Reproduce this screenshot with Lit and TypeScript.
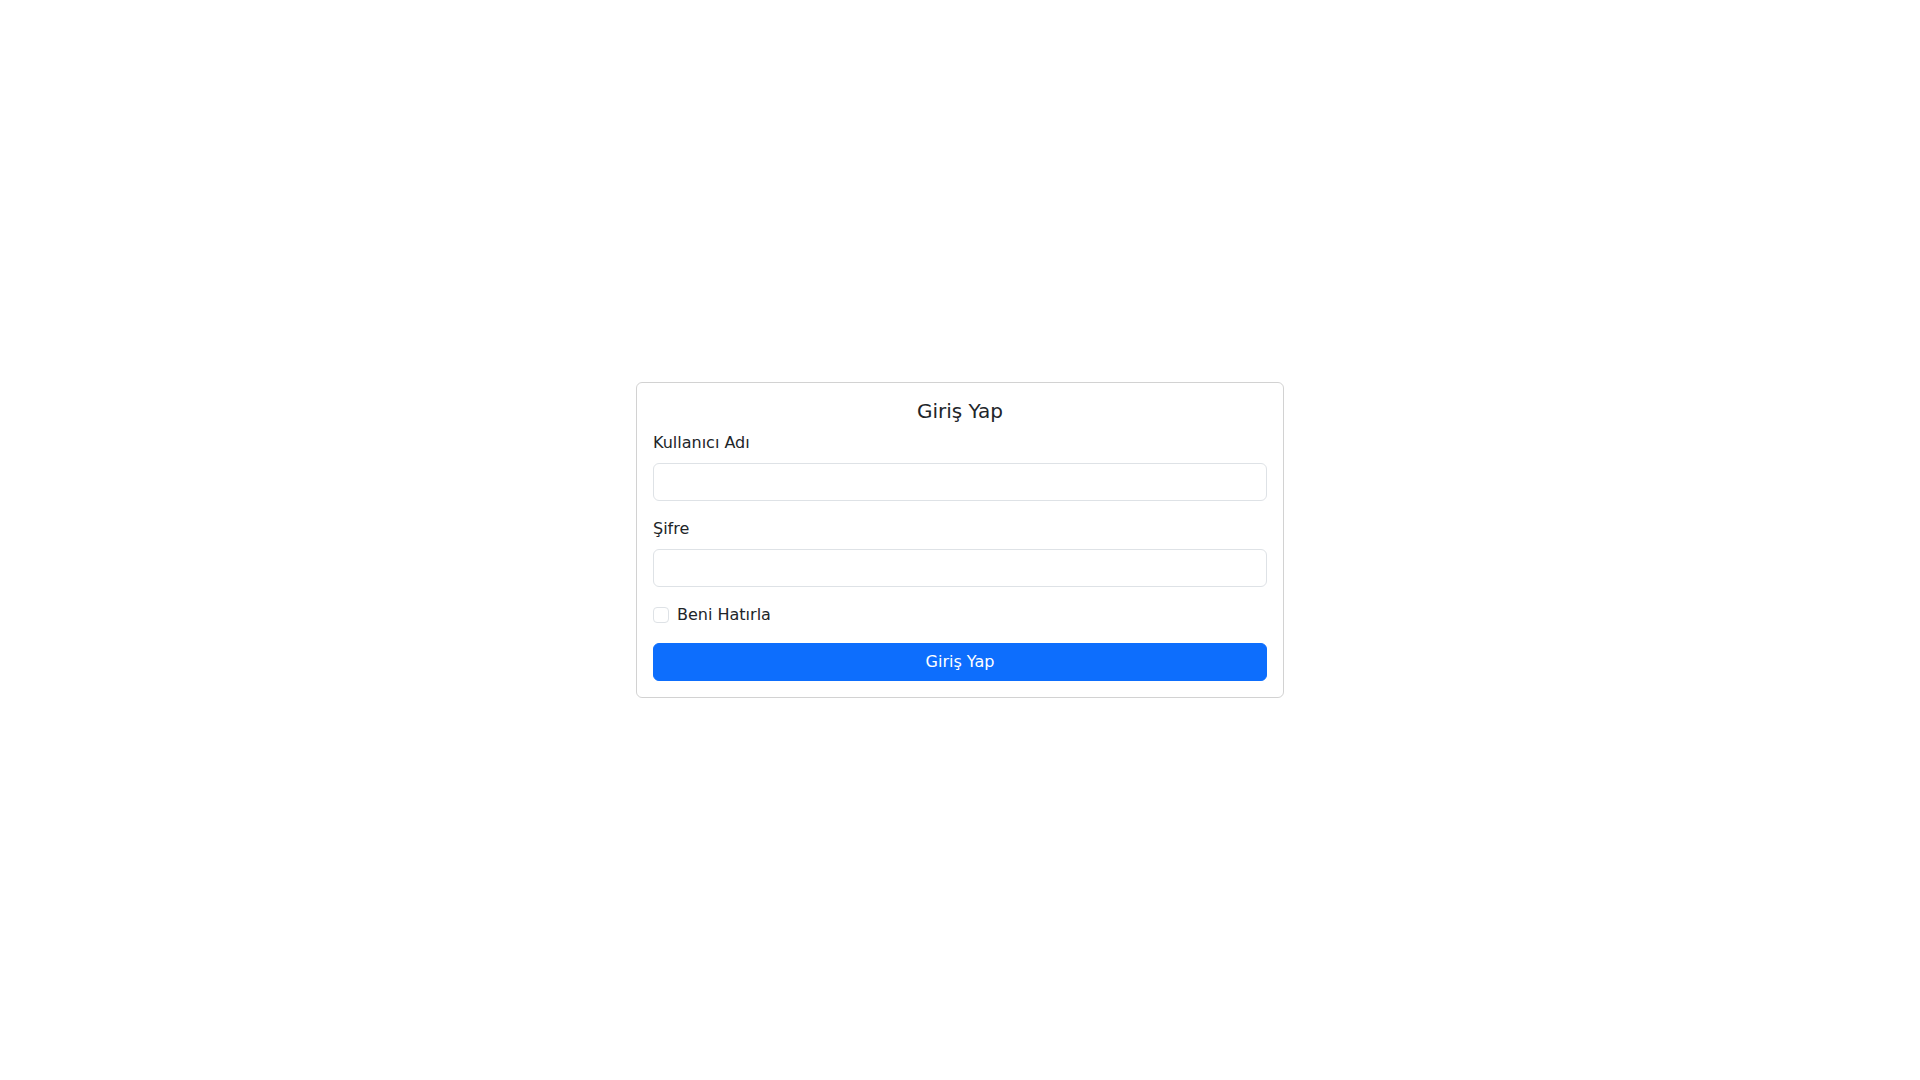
import { LitElement, css, html } from "lit";
import { customElement } from "lit/decorators.js";

@customElement("app-root")
export class AppRoot extends LitElement {
  protected render() {
    return html`
      <main class="page">
        <section class="card">
          <h1 class="title">Giriş Yap</h1>
          <form @submit=${this.handleSubmit}>
            <div class="field">
              <label class="label" for="username">Kullanıcı Adı</label>
              <input class="control" type="text" id="username" name="username" autocomplete="username" />
            </div>
            <div class="field">
              <label class="label" for="password">Şifre</label>
              <input class="control" type="password" id="password" name="password" autocomplete="current-password" />
            </div>
            <div class="check">
              <input class="checkbox" type="checkbox" id="remember" name="remember" />
              <label for="remember">Beni Hatırla</label>
            </div>
            <button class="submit" type="submit">Giriş Yap</button>
          </form>
        </section>
      </main>
    `;
  }

  private handleSubmit(event: Event) {
    event.preventDefault();
  }

  static styles = css`
    :host {
      display: block;
      font-family: "DejaVu Sans", sans-serif;
      font-size: 16px;
      line-height: 24px;
      color: #212529;
      background-color: #fff;
    }

    * {
      box-sizing: border-box;
    }

    .page {
      min-block-size: 100vh;
      display: flex;
      align-items: center;
      justify-content: center;
      padding-inline: 12px;
    }

    .card {
      inline-size: 100%;
      max-inline-size: 648px;
      padding: 16px;
      border: 1px solid rgba(0, 0, 0, 0.175);
      border-radius: 6px;
    }

    .title {
      margin: 0 0 8px;
      font-size: 20px;
      font-weight: 500;
      line-height: 24px;
      text-align: center;
    }

    .field {
      margin-block-end: 16px;
    }

    .label {
      display: block;
      margin-block-end: 8px;
    }

    .control {
      display: block;
      inline-size: 100%;
      margin: 0;
      padding: 6px 12px;
      font: inherit;
      color: inherit;
      background-color: #fff;
      border: 1px solid #dee2e6;
      border-radius: 6px;
      appearance: none;
      transition: border-color 0.15s ease-in-out, box-shadow 0.15s ease-in-out;
    }

    .control:focus,
    .checkbox:focus {
      border-color: #86b7fe;
      outline: 0;
      box-shadow: 0 0 0 4px rgba(13, 110, 253, 0.25);
    }

    .check {
      display: flex;
      align-items: center;
      gap: 8px;
      margin-block-end: 16px;
    }

    .checkbox {
      inline-size: 16px;
      block-size: 16px;
      margin: 0;
      background-color: #fff;
      border: 1px solid #dee2e6;
      border-radius: 4px;
      appearance: none;

      &:checked {
        background-color: #0d6efd;
        border-color: #0d6efd;
      }
    }

    .submit {
      display: block;
      inline-size: 100%;
      padding: 6px 12px;
      font: inherit;
      color: #fff;
      background-color: #0d6efd;
      border: 1px solid #0d6efd;
      border-radius: 6px;
      cursor: pointer;

      &:hover {
        background-color: #0b5ed7;
        border-color: #0a58ca;
      }
    }
  `;
}
